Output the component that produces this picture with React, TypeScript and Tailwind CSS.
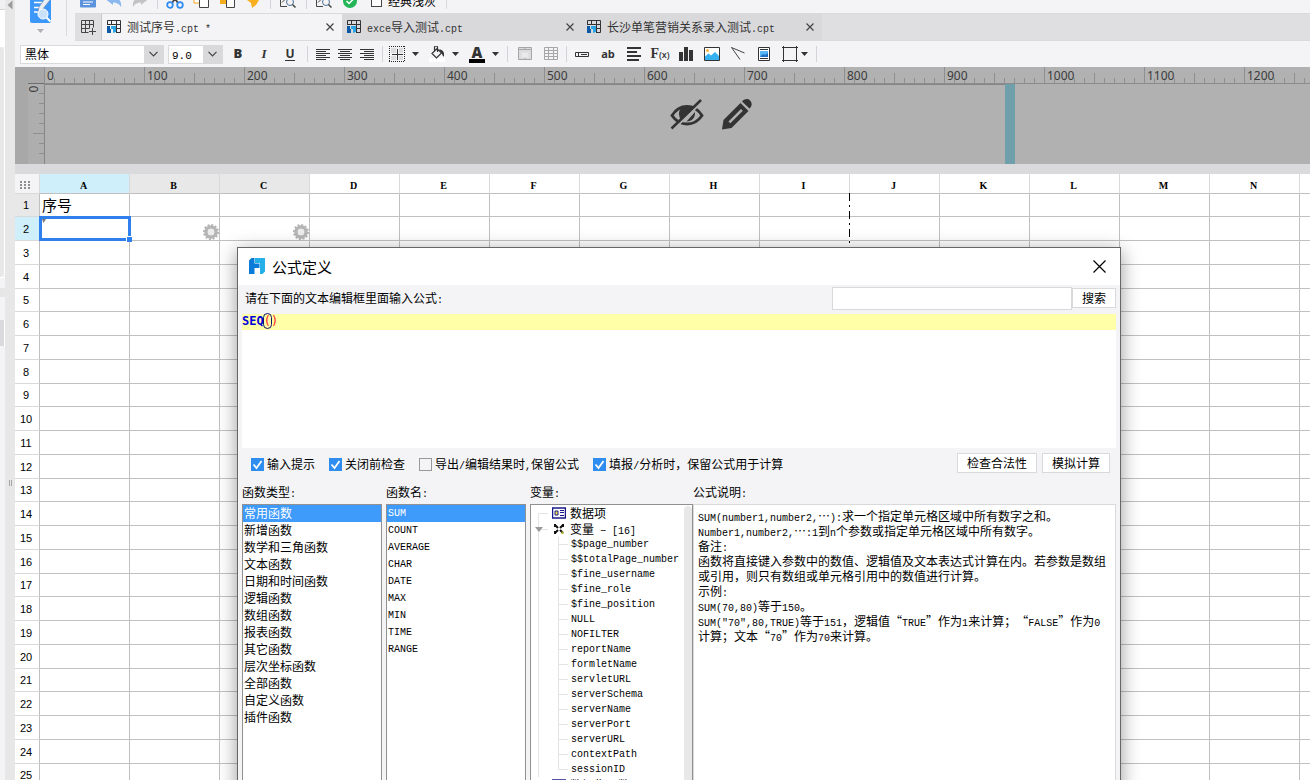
import { Fragment, useState } from "react";
import type { ReactNode } from "react";

interface SheetTab {
  id: string;
  title: string;
}

const tabs: SheetTab[] = [
  { id: "seq", title: "测试序号.cpt *" },
  { id: "import", title: "exce导入测试.cpt" },
  { id: "marketing", title: "长沙单笔营销关系录入测试.cpt" },
];

const columns = ["A", "B", "C", "D", "E", "F", "G", "H", "I", "J", "K", "L", "M", "N", "O"];
const rows = Array.from({ length: 25 }, (_, i) => i + 1);
const rulerMarks = Array.from({ length: 13 }, (_, i) => i * 100);

const functionTypes = [
  "常用函数",
  "新增函数",
  "数学和三角函数",
  "文本函数",
  "日期和时间函数",
  "逻辑函数",
  "数组函数",
  "报表函数",
  "其它函数",
  "层次坐标函数",
  "全部函数",
  "自定义函数",
  "插件函数",
];

const functionNames = ["SUM", "COUNT", "AVERAGE", "CHAR", "DATE", "MAX", "MIN", "TIME", "RANGE"];

const variables = [
  "$$page_number",
  "$$totalPage_number",
  "$fine_username",
  "$fine_role",
  "$fine_position",
  "NULL",
  "NOFILTER",
  "reportName",
  "formletName",
  "servletURL",
  "serverSchema",
  "serverName",
  "serverPort",
  "serverURL",
  "contextPath",
  "sessionID",
];

const description = [
  "SUM(number1,number2,…):求一个指定单元格区域中所有数字之和。",
  "Number1,number2,…:1到n个参数或指定单元格区域中所有数字。",
  "备注:",
  "函数将直接键入参数中的数值、逻辑值及文本表达式计算在内。若参数是数组或引用，则只有数组或单元格引用中的数值进行计算。",
  "示例:",
  "SUM(70,80)等于150。",
  "SUM(\"70\",80,TRUE)等于151，逻辑值“TRUE”作为1来计算；“FALSE”作为0计算；文本“70”作为70来计算。",
];

const checks = [
  { id: "hint", label: "输入提示", checked: true },
  { id: "closing", label: "关闭前检查", checked: true },
  { id: "export", label: "导出/编辑结果时,保留公式", checked: false },
  { id: "report", label: "填报/分析时，保留公式用于计算", checked: true },
];

export default function App() {
  return (
    <div
      lang="zh-CN"
      className="relative flex h-screen overflow-hidden bg-[#f4f4f7] font-['Noto_Sans_CJK_SC',sans-serif] text-xs text-black [text-spacing-trim:space-all]"
    >
      <SidePanel />
      <main className="flex min-w-0 flex-1 flex-col">
        <div className="flex">
          <div className="-mt-3 flex w-[51px] shrink-0 flex-col items-center">
            <button aria-label="数据集" className="flex flex-col items-center gap-1.5">
              <DatasetIcon />
              <Caret className="text-[#b0b0b4]" />
            </button>
          </div>
          <div className="h-9 w-px shrink-0 bg-[#dadadd]" />
          <div className="min-w-0 flex-1 pl-2">
            <TopToolbar />
            <TabBar />
          </div>
        </div>
        <FormatBar />
        <RulerArea />
        <div className="h-2.5 shrink-0 bg-[#dadadc]" />
        <Sheet />
      </main>
      <FormulaDialog />
    </div>
  );
}

// Half-width characters are set in a 6px wide mono face, the rest in the CJK face
function Mixed({ text }: { text: string }) {
  return (
    <>
      {text.split(/([\x21-\x7e]+(?: [\x21-\x7e]+)*)/).map((part, i) =>
        i % 2 ? (
          <span key={i} className="font-['Liberation_Mono',monospace] text-[10px] leading-[0px]">
            {part}
          </span>
        ) : (
          <Fragment key={i}>{part}</Fragment>
        )
      )}
    </>
  );
}

function SidePanel() {
  return (
    <aside className="flex shrink-0">
      <div className="flex w-[5px] flex-col">
        <div className="h-[10px] border-b border-[#d5d5d8] bg-[#f0f0f2]" />
        <div className="h-[37px] bg-white" />
        <div className="h-[230px] rounded-r border-r border-white bg-[#e8e8e9]" />
        <div className="h-[11px] border-t border-white" />
        <div className="h-[9px] bg-[#e6e6e7]" />
        <div className="h-[23px]" />
        <div className="h-[26px] border-r border-white bg-[#dadadd]" />
      </div>
      <div className="flex w-[10px] flex-col items-center bg-[#e7e7e8]">
        <svg width="6" height="10" viewBox="0 0 6 10" className="text-[#9b9b9b]">
          <path d="M5.5 0.5v9L0.5 5z" fill="currentColor" />
        </svg>
        <div className="flex flex-1 items-center">
          <div className="mt-44 h-1.5 w-[3px] border-x border-[#a5a5a5]" />
        </div>
      </div>
    </aside>
  );
}

function TopToolbar() {
  return (
    <div className="-mt-[11px] flex h-6 items-center">
      <ToolButton label="保存">
        <svg width="16" height="16" viewBox="0 0 16 16">
          <path d="M0 0h16v13.5a1 1 0 0 1-1 1H1a1 1 0 0 1-1-1z" fill="#5b93dd" />
          <path d="M3 9h10M3 11.500h7" stroke="#fff" />
        </svg>
      </ToolButton>
      <ToolButton label="撤销">
        <svg width="16" height="16" viewBox="0 0 16 16">
          <path d="M0 6.500L7 1v3.500c5 0 9 3 8 9.500-1.500-3-4-4.500-8-4.500V12z" fill="#8ab8ef" />
        </svg>
      </ToolButton>
      <ToolButton label="重做">
        <svg width="16" height="16" viewBox="0 0 16 16">
          <path d="M16 6.500L9 1v3.500C4 4.500 0 7.500 1 14c1.500-3 4-4.500 8-4.500V12z" fill="#c3c3c6" />
        </svg>
      </ToolButton>
      <Divider />
      <ToolButton label="剪切">
        <svg width="20" height="16" viewBox="0 0 20 16" fill="none" strokeWidth="1.800">
          <path d="M6 0l7 10M14 0L7 10" stroke="#444" />
          <circle cx="5" cy="12" r="2.800" stroke="#2e8cf0" />
          <circle cx="15" cy="12" r="2.800" stroke="#2e8cf0" />
        </svg>
      </ToolButton>
      <ToolButton label="复制">
        <svg width="17" height="16" viewBox="0 0 17 16" fill="#fff">
          <path d="M1 0h9v10H1z" stroke="#f0a81c" />
          <path d="M6.500 4.500h9v10h-9z" stroke="#444" />
        </svg>
      </ToolButton>
      <ToolButton label="粘贴">
        <svg width="17" height="16" viewBox="0 0 17 16">
          <path d="M1 0h11v11H1z" fill="#f5ad1d" />
          <path d="M7.500 4.500h8v10h-8z" fill="#fff" stroke="#444" />
        </svg>
      </ToolButton>
      <ToolButton label="格式刷">
        <svg width="14" height="16" viewBox="0 0 14 16">
          <path d="M2 0h10l1 7-3 5-4 3-1-5-4-3z" fill="#f8b021" />
        </svg>
      </ToolButton>
      <Divider />
      <ToolButton label="模板预览">
        <PreviewIcon />
      </ToolButton>
      <div className="w-px" />
      <Divider />
      <ToolButton label="查找">
        <PreviewIcon />
      </ToolButton>
      <ToolButton label="校验">
        <svg width="16" height="16" viewBox="0 0 16 16">
          <circle cx="8" cy="8" r="7" fill="#23b659" />
          <path d="M4.500 8l2.500 2.500L11.500 6" fill="none" stroke="#fff" strokeWidth="1.500" />
        </svg>
      </ToolButton>
      <label className="ml-2 flex items-center gap-1.5">
        <input type="checkbox" className="size-[11px] appearance-none border border-[#444] bg-white" />
        经典浅灰
      </label>
      <div className="ml-2.5 h-4 w-px bg-[#dadadd]" />
    </div>
  );
}

function ToolButton({ label, children }: { label: string; children: ReactNode }) {
  return (
    <button aria-label={label} className="flex w-[26px] shrink-0 items-center justify-center">
      {children}
    </button>
  );
}

function Divider() {
  return <div className="mx-1 h-4 w-px shrink-0 bg-[#d4d4d8]" />;
}

function TabBar() {
  const [active, setActive] = useState("seq");

  return (
    <div className="flex h-7 border-y border-[#dadadd] bg-[#dfdfe1]">
      <button aria-label="新建" className="flex w-[27px] items-center justify-center border-r border-[#c8c8cb] bg-[#dfdfe2]">
        <svg width="16" height="16" viewBox="0 0 16 16" fill="none" stroke="#444" strokeWidth="1">
          <path d="M1.500 1.500h12v7M1.500 1.500v12h7M1.500 5.500h12M1.500 9.500h8M5.500 1.500v12M9.500 1.500v8M12.500 9v7M9 12.500h7" />
        </svg>
      </button>
      {tabs.map((tab) => (
        <div
          key={tab.id}
          className={`flex w-60 items-center pl-[5px] pr-[7px] ${active === tab.id ? "bg-[#f4f4f7]" : "bg-[#d9d9dc]"}`}
        >
          <button
            onClick={() => setActive(tab.id)}
            className="flex flex-1 items-center gap-1.5 whitespace-nowrap text-left text-[#333]"
          >
            <CptIcon />
            <span>
              <Mixed text={tab.title} />
            </span>
          </button>
          <button aria-label="关闭" className="flex size-2.5 items-center justify-center">
            <svg width="8" height="8" viewBox="0 0 8 8" stroke="#444" strokeWidth="1.200">
              <path d="M0.500 0.500l7 7M7.500 0.500l-7 7" />
            </svg>
          </button>
        </div>
      ))}
    </div>
  );
}

function FormatBar() {
  return (
    <div className="flex h-[26px] shrink-0 items-center pl-[5px]">
      <div className="relative h-[19px] w-36 border border-[#d9d9dc] bg-white">
        <select aria-label="字体" className="h-full w-full appearance-none pl-1 leading-4 outline-none">
          <option>黑体</option>
        </select>
        <SelectArrow />
      </div>
      <div className="relative ml-1 h-[19px] w-[55px] border border-[#d9d9dc] bg-white">
        <select
          aria-label="字号"
          className="h-full w-full appearance-none pl-[3px] font-['Liberation_Mono',monospace] text-[11px] leading-4 outline-none"
        >
          <option>9.0</option>
        </select>
        <SelectArrow />
      </div>
      <div className="w-0.5" />
      <ToolButton label="加粗">
        <span className="font-['Open_Sans',sans-serif] text-[13px] font-extrabold text-[#333]">B</span>
      </ToolButton>
      <ToolButton label="倾斜">
        <span className="font-['Liberation_Serif',serif] text-[13px] font-bold italic text-[#333]">I</span>
      </ToolButton>
      <ToolButton label="下划线">
        <span className="border-b border-[#333] font-['Open_Sans',sans-serif] text-xs font-bold leading-[13px] text-[#333]">U</span>
      </ToolButton>
      <Divider />
      <div className="flex">
        <AlignButton label="左对齐" d="M0 1.500h14M0 3.500h10M0 5.500h14M0 7.500h10M0 9.500h14M0 11.500h10" />
        <AlignButton label="居中" d="M0 1.500h14M2 3.500h10M0 5.500h14M2 7.500h10M0 9.500h14M2 11.500h10" />
        <AlignButton label="右对齐" d="M0 1.500h14M4 3.500h10M0 5.500h14M4 7.500h10M0 9.500h14M4 11.500h10" />
      </div>
      <Divider />
      <div className="flex gap-1">
        <MenuButton label="边框">
          <svg width="16" height="16" viewBox="0 0 16 16" fill="none" stroke="#222">
            <path d="M2 2h5v5H2zM10 2h4v5h-4zM2 10h5v4H2zM10 10h4v4h-4z" fill="#dcdcdf" stroke="none" />
            <path d="M0 0.500h16M0 15.500h16M0.500 0v16M15.500 0v16" strokeDasharray="1 1" />
            <path d="M8.500 3v11M3 8.500h11" stroke="#333" />
          </svg>
        </MenuButton>
        <MenuButton label="背景">
          <svg width="16" height="16" viewBox="0 0 16 16">
            <path d="M0 12h16v4H0z" fill="#fff" />
            <path d="M3 7.500l5-5 4.500 4.500-5 5zM5.500 5V1.500a1.500 1.500 0 0 1 3 0V6" fill="none" stroke="#333" strokeWidth="1.200" />
            <path d="M10 3.500c3 0 5 2 5 4.500v2.500c-1.500 0-1.500-2-2.500-3.500z" fill="#333" />
          </svg>
        </MenuButton>
        <MenuButton label="字体颜色">
          <span className="border-b-4 border-black px-[3px] font-['Open_Sans',sans-serif] text-[15px] font-extrabold leading-[13px] text-[#333]">
            A
          </span>
        </MenuButton>
      </div>
      <Divider />
      <ToolButton label="合并单元格">
        <svg width="14" height="14" viewBox="0 0 14 14">
          <path d="M0.500 0.500h13v12H0.500zM0.500 2.500h13M7 0v3M7 11v2" fill="#dcdcdf" stroke="#a6a6a9" />
          <path d="M3.500 5.500h7v5h-7z" fill="#e9e9eb" />
        </svg>
      </ToolButton>
      <ToolButton label="取消合并">
        <svg width="14" height="14" viewBox="0 0 14 14" fill="none" stroke="#a6a6a9">
          <path d="M0.500 0.500h13v12H0.500zM0.500 3.500h13M0.500 6.500h13M0.500 9.500h13M4.500 0.500v12M9.500 0.500v12" />
        </svg>
      </ToolButton>
      <div className="-mx-0.5">
        <Divider />
      </div>
      <ToolButton label="控件">
        <svg width="14" height="5" viewBox="0 0 14 5" fill="none" stroke="#333">
          <path d="M0.500 0.500h13v4H0.500zM3.500 0.500v4M6 2.500h6" />
        </svg>
      </ToolButton>
      <ToolButton label="文本">
        <span className="font-['Open_Sans',sans-serif] text-[11px] font-bold text-[#333]">ab</span>
      </ToolButton>
      <ToolButton label="富文本">
        <svg width="14" height="14" viewBox="0 0 14 14" stroke="#333" strokeWidth="2">
          <path d="M0 1h14M0 5h10M0 9h14M0 13h12" />
        </svg>
      </ToolButton>
      <ToolButton label="公式">
        <span className="font-['Liberation_Serif',serif] text-sm font-bold text-[#333]">
          F<span className="font-['Open_Sans',sans-serif] text-[9px] font-semibold">(x)</span>
        </span>
      </ToolButton>
      <ToolButton label="图表">
        <svg width="14" height="14" viewBox="0 0 14 14" fill="#333">
          <path d="M0 5h4v9H0zM5 0h4v14H5zM10 3h4v11h-4z" />
        </svg>
      </ToolButton>
      <ToolButton label="图片">
        <svg width="16" height="14" viewBox="0 0 16 14">
          <path d="M0.500 0.500h15v13H0.500z" fill="#fff" stroke="#333" />
          <circle cx="3.500" cy="3.500" r="1.500" fill="#f8b133" />
          <path d="M1 13V9.500l3.500-3 2.500 2L11 5l4 4v4z" fill="#35b1f2" />
        </svg>
      </ToolButton>
      <ToolButton label="斜线">
        <svg width="14" height="14" viewBox="0 0 14 14" fill="none" stroke="#444">
          <path d="M0.500 0.500L13.500 6M0.500 0.500L9 12.500" />
        </svg>
      </ToolButton>
      <ToolButton label="子报表">
        <svg width="12" height="14" viewBox="0 0 12 14">
          <path d="M0.500 0.500h11v13H0.500z" fill="#fff" stroke="#333" />
          <path d="M2 2.500h8M2 11.500h8" stroke="#333" />
          <path d="M2 4h8v6H2z" fill="#58b6f5" />
          <path d="M2 10l3-3 2 1 3-2v4z" fill="#1f6fc4" />
        </svg>
      </ToolButton>
      <ToolButton label="悬浮元素">
        <svg width="16" height="16" viewBox="0 0 16 16" fill="none" stroke="#333">
          <path d="M0 1.500h16M0 14.500h16M1.500 0v16M14.500 0v16" />
        </svg>
      </ToolButton>
      <Caret className="-ml-0.5 text-[#333]" />
      <div className="ml-2 h-4 w-px bg-[#d4d4d8]" />
    </div>
  );
}

function SelectArrow() {
  return (
    <span className="pointer-events-none absolute inset-y-0 right-0 flex w-[19px] items-center justify-center bg-[#d9d9dc]">
      <svg width="9" height="6" viewBox="0 0 9 6" fill="none" stroke="#444" strokeWidth="1.200">
        <path d="M0.500 0.800l4 4 4-4" />
      </svg>
    </span>
  );
}

function AlignButton({ label, d }: { label: string; d: string }) {
  return (
    <button aria-label={label} className="flex w-[22px] items-center justify-center">
      <svg width="14" height="13" viewBox="0 0 14 13" stroke="#333">
        <path d={d} />
      </svg>
    </button>
  );
}

function MenuButton({ label, children }: { label: string; children: ReactNode }) {
  return (
    <button aria-label={label} className="flex w-9 items-center">
      <span className="flex w-5 justify-center">{children}</span>
      <span className="flex w-4 justify-center">
        <Caret className="text-[#333]" />
      </span>
    </button>
  );
}

function Caret({ className }: { className: string }) {
  return (
    <svg width="7" height="4" viewBox="0 0 7 4" className={className}>
      <path d="M0 0h7L3.500 4z" fill="currentColor" />
    </svg>
  );
}

function RulerArea() {
  return (
    <section className="flex h-[97px] shrink-0 bg-[#b1b1b1] font-['Noto_Sans',sans-serif] text-[#3c3c3c]">
      <div className="flex w-[29px] shrink-0 bg-[#a8a8a8] pl-[13px]">
        <div className="w-4">
          <div className="h-[17px] border-b border-[#6e6e6e]" />
          <div className="relative h-20 bg-[#aeaeae]">
            <span className="absolute left-0 top-0 flex h-2.5 w-3 -rotate-90 items-center justify-center text-xs">0</span>
            <svg width="16" height="80" viewBox="0 0 16 80" stroke="#8f8f8f">
              <path d="M11 9.500h5M11 19.500h5M11 29.500h5M11 39.500h5M5 49.500h11M11 59.500h5M11 69.500h5" />
            </svg>
          </div>
        </div>
      </div>
      <div className="flex min-w-0 flex-1 flex-col overflow-hidden">
        <div className="flex h-[17px] border-b border-[#8c8c8c]">
          {rulerMarks.map((mark) => (
            <div key={mark} className="relative h-4 w-[100px] shrink-0">
              <svg width="100" height="16" viewBox="0 0 100 16" stroke="#8f8f8f">
                <path d="M0.500 0v16M10.500 11v5M20.500 11v5M30.500 11v5M40.500 11v5M50.500 6v10M60.500 11v5M70.500 11v5M80.500 11v5M90.500 11v5" />
              </svg>
              <span className="absolute left-[3px] top-px text-xs leading-4">{mark}</span>
            </div>
          ))}
        </div>
        <div className="flex flex-1">
          <div className="flex w-[961px] items-start gap-[18px] border-l border-t border-[#858585] pl-[625px] pt-[14px]">
            <EyeOffIcon />
            <PencilIcon />
          </div>
          <div className="w-2.5 bg-[#6f9faa]" />
        </div>
      </div>
    </section>
  );
}

function Sheet() {
  return (
    <div className="relative min-h-0 flex-1 overflow-hidden bg-white">
      <table className="w-max table-fixed border-separate border-spacing-0 font-['Liberation_Sans',sans-serif]">
        <thead>
          <tr className="h-5">
            <th className="w-[25px] border-b border-r border-[#d9d9dc] bg-[#f4f4f7] p-0 pr-1 pt-0.5">
              <svg width="10" height="8" viewBox="0 0 10 8" fill="#8d8d8d" className="mx-auto">
                <path d="M0 0h2v2H0zM4 0h2v2H4zM8 0h2v2H8zM0 3h2v2H0zM4 3h2v2H4zM8 3h2v2H8zM0 6h2v2H0zM4 6h2v2H4zM8 6h2v2H8z" />
              </svg>
            </th>
            {columns.map((col, i) => (
              <th
                key={col}
                className={`w-[90px] border-b border-r border-b-[#c0c0c0] border-r-[#d9d9dc] p-0 pr-0.5 pt-1 font-['Liberation_Serif',serif] text-[10px] font-bold leading-[15px] ${
                  i === 0 ? "bg-[#cfeffb]" : i < 3 ? "bg-[#e8e8e8]" : "bg-white"
                }`}
              >
                {col}
              </th>
            ))}
          </tr>
        </thead>
        <tbody>
          {rows.map((row) => (
            <tr key={row} className={row % 4 === 1 ? "h-[23px]" : "h-6"}>
              <th
                className={`border-b border-r border-b-[#d9d9dc] border-r-[#c0c0c0] p-0 pr-0.5 text-[11px] font-normal leading-4 ${
                  row === 1 ? "bg-[#e8e8e8]" : row === 2 ? "bg-[#cfeffb]" : "bg-white"
                }`}
              >
                {row}
              </th>
              {columns.map((col) => (
                <td key={col} className="relative border-b border-r border-[#c0c0c0] p-0">
                  {row === 1 && col === "A" && (
                    <span className="block pl-0.5 font-['Noto_Sans_CJK_SC',sans-serif] text-[15px] leading-[22px]">序号</span>
                  )}
                  {row === 2 && col === "A" && <SelectedCell />}
                  {row === 2 && (col === "B" || col === "C") && <GearIcon />}
                </td>
              ))}
            </tr>
          ))}
        </tbody>
      </table>
      {/* Page break guide */}
      <svg width="1" height="760" className="absolute left-[834px] top-[19px]">
        <path d="M0.500 0v760" stroke="#fff" />
        <path d="M0.500 0v760" stroke="#000" strokeDasharray="8 4 2 4" />
      </svg>
    </div>
  );
}

function SelectedCell() {
  return (
    <div className="absolute -bottom-px -left-px -right-0.5 -top-px z-10 border-[3px] border-[#2f80ed]">
      <svg width="4" height="4" viewBox="0 0 4 4">
        <path d="M0 0h4L1.500 4z" fill="#777" />
      </svg>
      <div className="absolute -bottom-1 -right-1 size-[6px] border-l border-t border-white bg-[#2f80ed]" />
    </div>
  );
}

function ListBox({ label, items, mono }: { label: string; items: string[]; mono?: boolean }) {
  const [selected, setSelected] = useState(items[0]);

  return (
    <div className="flex w-[140px] shrink-0 flex-col">
      <span className="h-5 leading-4">
        <Mixed text={label} />
      </span>
      <ul role="listbox" aria-label={label} className="flex-1 border border-[#919191] bg-white">
        {items.map((item) => (
          <li
            key={item}
            role="option"
            aria-selected={item === selected}
            onClick={() => setSelected(item)}
            className={`h-[17px] pl-px ${
              mono ? "font-['Liberation_Mono',monospace] text-[10px] leading-[17px]" : "leading-4"
            } ${item === selected ? "bg-[#3f9bfb] text-white" : ""}`}
          >
            {item}
          </li>
        ))}
      </ul>
    </div>
  );
}

function FormulaDialog() {
  return (
    <div
      role="dialog"
      aria-label="公式定义"
      className="absolute -bottom-6 left-[237px] top-[247px] z-20 flex w-[884px] flex-col border border-[#666] bg-[#f4f4f7] shadow-[0_4px_18px_rgba(0,0,0,0.4)]"
    >
      <div className="flex h-[37px] shrink-0 items-center bg-white pl-[11px] pr-3.5">
        <LogoIcon />
        <h1 className="ml-[7px] flex-1 text-[15px] leading-5">公式定义</h1>
        <button aria-label="关闭" className="flex size-3.5 items-center justify-center">
          <svg width="13" height="13" viewBox="0 0 13 13" stroke="#000" strokeWidth="1.200">
            <path d="M0.500 0.500l12 12M12.500 0.500l-12 12" />
          </svg>
        </button>
      </div>

      <div className="flex min-h-0 flex-1 flex-col px-1">
        <div className="flex h-[29px] shrink-0 items-start pt-0.5">
          <label htmlFor="keyword" className="flex-1 pl-[3px] leading-[22px]">
            <Mixed text="请在下面的文本编辑框里面输入公式:" />
          </label>
          <input id="keyword" className="h-[23px] w-60 border border-[#d9d9dc] bg-white px-1 outline-none" />
          <button className="mt-px h-5 w-11 border border-[#d9d9dc] bg-white leading-[18px]">搜索</button>
        </div>

        <div
          role="textbox"
          aria-multiline="true"
          aria-label="公式"
          contentEditable
          suppressContentEditableWarning
          className="h-[134px] shrink-0 bg-white font-['DejaVu_Sans_Mono',monospace] text-xs outline-none"
        >
          <div className="h-4 bg-[#ffffa8] leading-[14px]">
            <b className="text-[#0000d8]">SEQ</b>
            <span className="rounded-full text-[#ff2020] outline outline-[#10106a]">(</span>
            <span className="text-[#ff2020]">)</span>
          </div>
        </div>

        <div className="flex h-9 shrink-0 items-start pl-[9px] pr-1.5 pt-[5px]">
          <div className="flex flex-1 gap-3.5 pt-px">
            {checks.map((check) => (
              <label key={check.id} className="flex items-center gap-[3px] whitespace-nowrap leading-5">
                <span className="relative flex">
                  <input
                    type="checkbox"
                    defaultChecked={check.checked}
                    className="peer size-[13px] appearance-none border border-[#999] bg-[#f4f4f7] checked:border-[#2f8def] checked:bg-[#2f8def]"
                  />
                  <svg
                    width="13"
                    height="13"
                    viewBox="0 0 13 13"
                    fill="none"
                    stroke="#fff"
                    strokeWidth="1.800"
                    className="pointer-events-none absolute inset-0 opacity-0 peer-checked:opacity-100"
                  >
                    <path d="M2.500 6.500l3 3.500 5-7" />
                  </svg>
                </span>
                <span>
                  <Mixed text={check.label} />
                </span>
              </label>
            ))}
          </div>
          <button className="h-5 w-20 border border-[#d9d9dc] bg-white leading-[18px]">检查合法性</button>
          <button className="ml-[5px] h-5 w-[68px] border border-[#d9d9dc] bg-white leading-[18px]">模拟计算</button>
        </div>

        <div className="flex min-h-0 flex-1 gap-1">
          <ListBox label="函数类型:" items={functionTypes} />
          <ListBox label="函数名:" items={functionNames} mono />
          <div className="flex min-w-0 flex-1">
            <VariableTree />
            <div className="flex min-w-0 flex-1 flex-col">
              <span className="h-5 leading-4">
                <Mixed text="公式说明:" />
              </span>
              <div className="min-h-0 flex-1 border border-[#d9d9dc] bg-white px-1 py-[3px] leading-[15px]">
                {description.map((line) => (
                  <p key={line}>
                    <Mixed text={line} />
                  </p>
                ))}
              </div>
            </div>
          </div>
        </div>
      </div>
    </div>
  );
}

function VariableTree() {
  return (
    <div className="flex w-[163px] shrink-0 flex-col">
      <span className="h-5 leading-4">
        <Mixed text="变量:" />
      </span>
      <div className="flex min-h-0 flex-1 overflow-hidden border border-[#919191] bg-white">
        <ul role="tree" aria-label="变量" className="flex-1">
          <li role="treeitem" className="flex h-4 items-center whitespace-nowrap">
            <svg width="21" height="16" viewBox="0 0 21 16" fill="none" stroke="#e4e4e4">
              <path d="M7.500 16V8.500H17" />
            </svg>
            <DataItemIcon />
            <span className="ml-1 leading-4">数据项</span>
          </li>
          <li role="treeitem" aria-expanded="true" className="flex h-4 items-center whitespace-nowrap">
            <svg width="21" height="16" viewBox="0 0 21 16">
              <path d="M7.500 0v16M7.500 8.500H17" stroke="#e4e4e4" />
              <path d="M4 6h8l-4 5z" fill="#9a9a9a" />
            </svg>
            <VariableIcon />
            <span className="ml-1 leading-4">
              变量<span className="whitespace-pre font-['Liberation_Mono',monospace] text-[10px] leading-none"> − [16]</span>
            </span>
          </li>
          {variables.map((name, i) => (
            <li
              key={name}
              role="treeitem"
              className="flex h-[15px] items-center font-['Liberation_Mono',monospace] text-[10px] leading-[15px]"
            >
              <svg width="40" height="15" viewBox="0 0 40 15" fill="none" stroke="#e4e4e4">
                <path d="M7.500 0v15" />
                <path d={i === variables.length - 1 ? "M27.500 0v7.500H37" : "M27.500 0v15M27.500 7.500H37"} />
              </svg>
              {name}
            </li>
          ))}
          <li role="treeitem" className="flex h-4 items-center whitespace-nowrap pl-[21px]">
            <DataItemIcon />
            <span className="ml-1 leading-4">数据集函数</span>
          </li>
        </ul>
        <div className="mt-px w-2 rounded-t bg-[#e8e8e8]" />
      </div>
    </div>
  );
}

function CptIcon() {
  return (
    <svg width="14" height="14" viewBox="0 0 14 14" fill="none">
      <path d="M0.500 5V0.500h13v12H9M0.500 4.500h13M4.500 0.500V5M9.500 0.500v12M9 8.500h4" stroke="#333" />
      <path d="M0 6h3v3h1v4H0z" fill="#0a5aa8" />
      <path d="M4 6h5v6l-3 1V9H4z" fill="#2aa6e6" />
    </svg>
  );
}

function LogoIcon() {
  return (
    <svg width="16" height="17" viewBox="0 0 16 17">
      <path d="M2.500 0H5.500v5.500h5V10h-5v6H0V2.500z" fill="#0a7bd8" />
      <path d="M6 0h10v13.500L13.500 16H11V5H6z" fill="#25b0ea" />
    </svg>
  );
}

function DatasetIcon() {
  return (
    <svg width="22" height="35" viewBox="0 0 22 35">
      <rect x="0" y="0" width="21" height="35" rx="2" fill="#3d97f8" />
      <path d="M4 14.500h8M4 19.500h6M4 24h4" stroke="#fff" strokeWidth="1.500" />
      <path d="M16 9l4 3-8 10-4 2 1-5z" fill="#e9eef5" stroke="#7f8da0" strokeWidth="0.700" />
      <circle cx="13" cy="26" r="5" fill="#c9e2fa" stroke="#fff" />
      <path d="M16.500 29.500l4 4" stroke="#fff" strokeWidth="2" />
    </svg>
  );
}

function PreviewIcon() {
  return (
    <svg width="16" height="16" viewBox="0 0 16 16" fill="none" stroke="#444">
      <path d="M12.500 4V0M0.500 0v13.500H7M2 9.500l3-3" />
      <circle cx="10" cy="9" r="3.500" stroke="#4d6f94" />
      <path d="M12.500 11.500l3 3" strokeWidth="1.500" />
    </svg>
  );
}

function EyeOffIcon() {
  return (
    <svg width="34" height="31" viewBox="0 0 34 31" fill="none">
      <path d="M2 16.500C6 10 11 7.500 17 7.500s11 2.500 15 9c-4 6-9 8.500-15 8.500S6 22.500 2 16.500z" stroke="#333" strokeWidth="2.800" />
      <path d="M9 14.500C9 10 12 7 17 7c3 0 5 1 7 3L12 22c-2-1.500-3-4.500-3-7.500z" fill="#333" />
      <path d="M25 13c0.500 5.500-3 9.500-8.500 9.500z" fill="#333" />
      <path d="M3.500 30.500L33 2" stroke="#b1b1b1" strokeWidth="2" />
      <path d="M1.500 29.500L31 1" stroke="#333" strokeWidth="2.500" />
    </svg>
  );
}

function PencilIcon() {
  return (
    <svg width="30" height="31" viewBox="0 0 30 31">
      <path d="M0 30.500l1.500-9.500L18.500 4l8 8L9.500 29z" fill="#333" />
      <path d="M20 2.500C23-0.500 26-0.500 28 1.500s2.500 5-0.500 8z" fill="#333" />
      <path d="M6.500 22.500L19 10l1.800 1.800L8.300 24.300z" fill="#b1b1b1" />
    </svg>
  );
}

function GearIcon() {
  return (
    <svg width="16" height="16" viewBox="0 0 16 16" fill="none" className="absolute bottom-0 right-0">
      <circle cx="8" cy="8" r="7" stroke="#b5b5b5" strokeWidth="2" strokeDasharray="2 1.660" />
      <circle cx="8" cy="8" r="5" stroke="#b5b5b5" strokeWidth="3.500" />
      <circle cx="8" cy="8" r="3.200" fill="#ececec" />
    </svg>
  );
}

function DataItemIcon() {
  return (
    <svg width="14" height="12" viewBox="0 0 14 12" fill="none" stroke="#1a1a8c">
      <path d="M0.500 1h13v10H0.500z" fill="#fff" strokeWidth="1.500" />
      <path d="M3 4h3v4H3z" fill="#f5e04a" />
      <path d="M8 3.500h4M8 5.500h4M8 8.500h4" />
    </svg>
  );
}

function VariableIcon() {
  return (
    <svg width="14" height="12" viewBox="0 0 14 12" fill="none" stroke="#111" strokeWidth="2">
      <path d="M3 2l3 3M11 2L8 5M3 10l3-3M11 10L8 7" />
      <path d="M3 1v3M11 1v3M3 8v3" />
      <path d="M10.500 8.500v2.500" stroke="#b5b82c" />
    </svg>
  );
}
